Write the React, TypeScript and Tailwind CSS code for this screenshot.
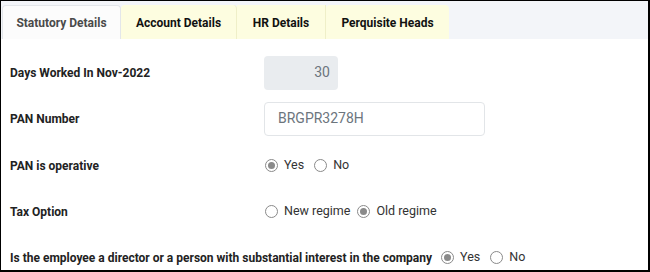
import React from "react";

function Radio({ checked }: { checked: boolean }) {
  return (
    <span className="inline-flex h-[13px] w-[13px] items-center justify-center rounded-full border border-[#8a8a8a] bg-white">
      {checked && <span className="h-[7px] w-[7px] rounded-full bg-[#8a8a8a]" />}
    </span>
  );
}

function RadioOpt({ checked, label }: { checked: boolean; label: string }) {
  return (
    <label className="flex items-center gap-[6px] text-[12.5px] text-[#333]">
      <Radio checked={checked} />
      <span>{label}</span>
    </label>
  );
}

export default function App() {
  const font = { fontFamily: "Roboto, 'Liberation Sans', sans-serif" };
  return (
    <div
      className="h-[272px] w-[650px] overflow-hidden border-t border-l border-r-2 border-b-2 border-black bg-white"
      style={font}
    >
      <div className="flex h-[38px] items-end bg-[#f3f5f9] pl-[1px]">
        <div className="flex h-[34px] w-[119px] items-center justify-center rounded-t-[4px] border border-b-0 border-[#e3e6ea] bg-[#fcfcfc] pt-[1px] text-[12px] font-bold text-[#4a4a4a]">
          Statutory Details
        </div>
        <div className="flex h-[34px] w-[116px] items-center justify-center rounded-t-[4px] border-r border-[#efefc8] bg-[#fdfde0] pt-[1px] text-[12px] font-bold text-[#111]">
          Account Details
        </div>
        <div className="flex h-[34px] w-[89px] items-center justify-center border-r border-[#efefc8] bg-[#fdfde0] pt-[1px] text-[12px] font-bold text-[#111]">
          HR Details
        </div>
        <div className="flex h-[34px] w-[123px] items-center justify-center rounded-t-[4px] bg-[#fdfde0] pt-[1px] text-[12px] font-bold text-[#111]">
          Perquisite Heads
        </div>
      </div>
      <div className="flex flex-col pl-[9px] text-[12px] font-bold text-[#222]">
        <div className="mt-[16px] flex h-[34px] items-center pt-[1px]">
          <div className="w-[254px]">Days Worked In Nov-2022</div>
          <div className="flex h-[34px] w-[74px] items-center justify-end rounded-[4px] bg-[#e9ecef] pr-[8px] text-[14px] font-normal text-[#6c757d]">
            30
          </div>
        </div>
        <div className="mt-[12px] flex h-[34px] items-center pt-[1px]">
          <div className="w-[254px]">PAN Number</div>
          <div className="flex h-[34px] w-[221px] items-center rounded-[4px] border border-[#e2e5e8] bg-white pl-[13px] text-[14px] font-normal text-[#6c757d]">
            BRGPR3278H
          </div>
        </div>
        <div className="mt-[13px] flex h-[34px] items-center pt-[1px]">
          <div className="w-[255px]">PAN is operative</div>
          <div className="flex items-center gap-[10px] font-normal">
            <RadioOpt checked label="Yes" />
            <RadioOpt checked={false} label="No" />
          </div>
        </div>
        <div className="mt-[12px] flex h-[34px] items-center pt-[1px]">
          <div className="w-[255px]">Tax Option</div>
          <div className="flex items-center gap-[7px] font-normal">
            <RadioOpt checked={false} label="New regime" />
            <RadioOpt checked label="Old regime" />
          </div>
        </div>
        <div className="mt-[12px] flex h-[34px] items-center pt-[1px]">
          <div className="mr-[9px]">
            Is the employee a director or a person with substantial interest in the company
          </div>
          <div className="flex items-center gap-[10px] font-normal">
            <RadioOpt checked label="Yes" />
            <RadioOpt checked={false} label="No" />
          </div>
        </div>
      </div>
    </div>
  );
}
